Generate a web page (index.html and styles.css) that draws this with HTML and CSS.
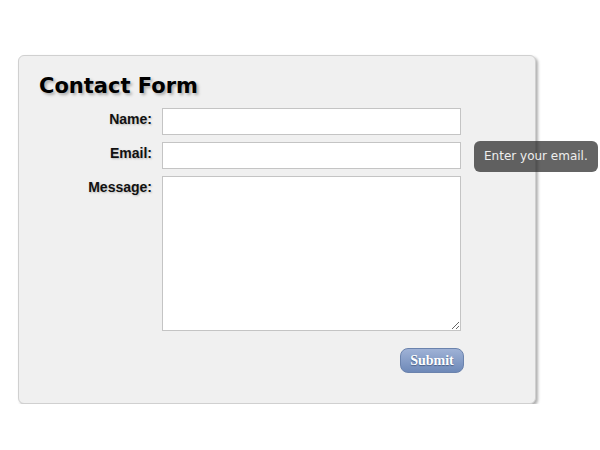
FILE: index.html
```html
<!DOCTYPE html>
<html>
<head>
<meta charset="utf-8">
<link rel="stylesheet" href="styles.css">
</head>
<body>
<div class="page">
  <form class="panel">
    <h1 class="title">Contact Form</h1>
    <div class="grid">
      <label class="label" for="name">Name:</label>
      <div class="field"><input class="input" id="name" type="text"></div>
      <label class="label" for="email">Email:</label>
      <div class="field">
        <input class="input" id="email" type="text">
        <div class="tip">Enter your email.</div>
      </div>
      <label class="label" for="msg">Message:</label>
      <div class="field"><textarea class="area" id="msg"></textarea></div>
      <div class="actions"><button class="submit" type="button">Submit</button></div>
    </div>
  </form>
</div>
</body>
</html>
```
FILE: styles.css
```css
html, body {
  margin: 0;
  padding: 0;
  background: #ffffff;
}
.page {
  padding: 55px 0 0 18px;
}
.panel {
  box-sizing: border-box;
  width: 518px;
  height: 349px;
  margin: 0;
  padding: 19px 20px 0 19px;
  background: #f0f0f0;
  border: 1px solid #d0d0d0;
  border-radius: 6px;
  box-shadow: 2px 2px 3px #b0b0b0;
}
.title {
  margin: 0 0 10px 1px;
  font-family: "DejaVu Sans", sans-serif;
  font-weight: bold;
  font-size: 21px;
  line-height: 23px;
  color: #000;
  text-shadow: 2px 2px 3px #aaa;
}
.grid {
  display: grid;
  grid-template-columns: 114px 299px;
  column-gap: 10px;
  row-gap: 7px;
}
.label {
  text-align: right;
  padding-top: 3px;
  font-family: "Liberation Sans", Arial, sans-serif;
  font-weight: bold;
  font-size: 14px;
  line-height: 16px;
  color: #111;
  text-shadow: 1px 1px 2px #bbb;
}
.field {
  position: relative;
}
.input, .area {
  display: block;
  box-sizing: border-box;
  width: 299px;
  margin: 0;
  border: 1px solid #c4c4c4;
  background: #fff;
  border-radius: 0;
  padding: 2px 4px;
  font-family: "Liberation Sans", Arial, sans-serif;
  font-size: 13px;
  outline: none;
}
.input {
  height: 27px;
}
.area {
  height: 155px;
  resize: both;
}
.tip {
  position: absolute;
  left: calc(100% + 13px);
  top: -1px;
  white-space: nowrap;
  padding: 8px 10px;
  line-height: 15px;
  font-family: "DejaVu Sans", Verdana, sans-serif;
  font-size: 12px;
  color: #eeeeee;
  background: rgba(40, 40, 40, 0.72);
  border-radius: 6px;
}
.actions {
  grid-column: 2;
  display: flex;
  justify-content: flex-end;
  margin-top: 10px;
  margin-right: -3px;
}
.submit {
  box-sizing: border-box;
  width: 64px;
  height: 25px;
  padding: 0;
  border: 1px solid #6b83ad;
  border-radius: 8px;
  background: linear-gradient(#9fb2d6, #6e89b8);
  font-family: "Liberation Serif", "Times New Roman", serif;
  font-weight: bold;
  font-size: 14px;
  color: #fff;
  text-shadow: 0 1px 1px #4a5f85;
}
```
